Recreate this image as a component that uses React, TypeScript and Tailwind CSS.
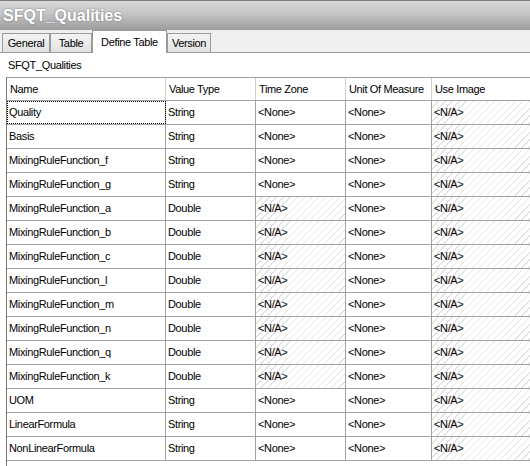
import React from 'react';

type Column = {
  label: string;
  width: string;
};

type FieldRow = {
  name: string;
  valueType: 'String' | 'Double';
};

const columns: Column[] = [
  { label: 'Name', width: 'w-[159px]' },
  { label: 'Value Type', width: 'w-[90px]' },
  { label: 'Time Zone', width: 'w-[90px]' },
  { label: 'Unit Of Measure', width: 'w-[86px]' },
  { label: 'Use Image', width: 'w-[120px]' },
];

const rows: FieldRow[] = [
  { name: 'Quality', valueType: 'String' },
  { name: 'Basis', valueType: 'String' },
  { name: 'MixingRuleFunction_f', valueType: 'String' },
  { name: 'MixingRuleFunction_g', valueType: 'String' },
  { name: 'MixingRuleFunction_a', valueType: 'Double' },
  { name: 'MixingRuleFunction_b', valueType: 'Double' },
  { name: 'MixingRuleFunction_c', valueType: 'Double' },
  { name: 'MixingRuleFunction_l', valueType: 'Double' },
  { name: 'MixingRuleFunction_m', valueType: 'Double' },
  { name: 'MixingRuleFunction_n', valueType: 'Double' },
  { name: 'MixingRuleFunction_q', valueType: 'Double' },
  { name: 'MixingRuleFunction_k', valueType: 'Double' },
  { name: 'UOM', valueType: 'String' },
  { name: 'LinearFormula', valueType: 'String' },
  { name: 'NonLinearFormula', valueType: 'String' },
];

const tabs = ['General', 'Table', 'Define Table', 'Version'];
const activeTab = 'Define Table';

// read-only cells get the light diagonal hatch
const hatched =
  'bg-[repeating-linear-gradient(135deg,#ffffff_0px,#ffffff_4px,#e4e4e4_4px,#e4e4e4_5px)]';

function Cell({
  width,
  children,
  readOnly,
  focused,
}: {
  width: string;
  children: React.ReactNode;
  readOnly?: boolean;
  focused?: boolean;
}) {
  return (
    <div
      className={`${width} shrink-0 h-full flex items-center pl-[2px] border-r border-[#a3a3a3] whitespace-nowrap overflow-hidden ${
        readOnly ? hatched : 'bg-white'
      } ${focused ? 'outline outline-1 outline-dotted outline-black -outline-offset-1' : ''}`}
    >
      {children}
    </div>
  );
}

function TabButton({ label }: { label: string }) {
  const selected = label === activeTab;
  const widths: Record<string, string> = {
    General: 'w-[48px]',
    Table: 'w-[42px]',
    'Define Table': 'w-[75px]',
    Version: 'w-[44px]',
  };

  if (selected) {
    return (
      <div
        className={`${widths[label]} h-[23px] -mb-px relative z-10 bg-white border border-b-0 border-[#9a9a9a] flex items-start justify-center pt-[3px]`}
      >
        {label}
      </div>
    );
  }

  return (
    <div
      className={`${widths[label]} h-[19px] bg-[linear-gradient(#f3f3f3,#e2e2e2)] border border-b-0 border-[#9a9a9a] flex items-center justify-center`}
    >
      {label}
    </div>
  );
}

export default function App() {
  return (
    <div className="w-[530px] h-[466px] overflow-hidden bg-white flex flex-col text-[11px] tracking-[-0.35px] text-black font-['Liberation_Sans',Arial,sans-serif]">
      {/* window caption */}
      <div className="h-[30px] shrink-0 border-t border-[#7c7c7c] bg-[linear-gradient(#d8d8d8,#c4c4c4_45%,#9c9c9c)] flex items-center pl-[3px]">
        <span className="text-[16px] font-bold tracking-normal text-white [text-shadow:0_0_2px_#6f6f6f]">
          SFQT_Qualities
        </span>
      </div>

      {/* tab strip */}
      <div className="h-[23px] shrink-0 bg-[#f0f0f0] border-b border-[#9a9a9a] flex items-end pl-[2px]">
        {tabs.map((t) => (
          <TabButton
            key={t}
            label={t}
          />
        ))}
      </div>

      <div className="h-[24px] shrink-0 pl-[8px] pt-[4px]">SFQT_Qualities</div>

      {/* field grid */}
      <div className="flex-1 ml-[6px] border-l border-[#7a7a7a] flex flex-col">
        <div className="h-[24px] shrink-0 flex border-t border-b border-[#a3a3a3] bg-white">
          {columns.map((c) => (
            <div
              key={c.label}
              className={`${c.width} shrink-0 h-full flex items-center pl-[3px] border-r border-[#d0d0d0] whitespace-nowrap`}
            >
              {c.label}
            </div>
          ))}
        </div>

        {rows.map((r, i) => {
          const isDouble = r.valueType === 'Double';
          return (
            <div
              key={r.name}
              className="h-[24px] shrink-0 flex border-b border-[#a3a3a3]"
            >
              <Cell
                width={columns[0].width}
                focused={i === 0}
              >
                {r.name}
              </Cell>
              <Cell width={columns[1].width}>{r.valueType}</Cell>
              <Cell
                width={columns[2].width}
                readOnly={isDouble}
              >
                {isDouble ? '<N/A>' : '<None>'}
              </Cell>
              <Cell width={columns[3].width}>{'<None>'}</Cell>
              <Cell
                width={columns[4].width}
                readOnly
              >
                {'<N/A>'}
              </Cell>
            </div>
          );
        })}
      </div>
    </div>
  );
}
